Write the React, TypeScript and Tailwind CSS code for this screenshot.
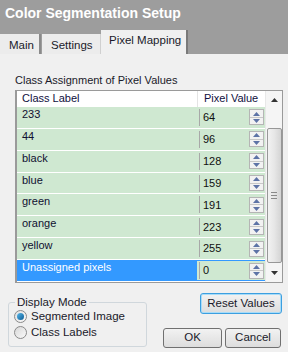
import React from "react";

const rows = [
  { label: "233", value: "64" },
  { label: "44", value: "96" },
  { label: "black", value: "128" },
  { label: "blue", value: "159" },
  { label: "green", value: "191" },
  { label: "orange", value: "223" },
  { label: "yellow", value: "255" },
];

function Spinner() {
  return (
    <div className="flex flex-col w-[15px] h-[16px] border border-[#b5b5b5] bg-[#f2f2f2]">
      <div className="flex-1 flex items-center justify-center border-b border-[#c8c8c8]">
        <svg width="7" height="4" viewBox="0 0 7 4">
          <path d="M0 4 L3.5 0 L7 4 Z" fill="#5d73a6" />
        </svg>
      </div>
      <div className="flex-1 flex items-center justify-center">
        <svg width="7" height="4" viewBox="0 0 7 4">
          <path d="M0 0 L3.5 4 L7 0 Z" fill="#5d73a6" />
        </svg>
      </div>
    </div>
  );
}

function Row({ label, value, selected }: { label: string; value: string; selected?: boolean }) {
  return (
    <div className="flex h-[22px] border-b border-white">
      <div
        className={
          selected
            ? "w-[180px] bg-[#3399ff] text-white pl-[5px] leading-[15px]"
            : "w-[180px] bg-[#cfe8d1] text-[#101030] pl-[5px] leading-[15px]"
        }
      >
        {label}
      </div>
      <div
        className={
          selected
            ? "flex-1 bg-[#cfe8d1] flex items-center border-y border-[#3399ff]"
            : "flex-1 bg-[#cfe8d1] flex items-center"
        }
      >
        <div className="w-[1px] h-[17px] bg-[#a8a8a8] ml-[2px]" />
        <span className="flex-1 pl-[3px] text-[#101010]">{value}</span>
        <div className="mr-[1px]">
          <Spinner />
        </div>
      </div>
    </div>
  );
}

export default function App() {
  return (
    <div
      className="relative w-[288px] h-[352px] bg-[#f0f0f0] overflow-hidden text-[11px] text-[#1a1a2a]"
      style={{ fontFamily: '"Liberation Sans", Arial, sans-serif' }}
    >
      <div className="bg-[#9d9d9d] h-[54px] flex flex-col">
        <div className="h-[31px] pl-[5px] pt-[4px] text-white font-bold text-[14px] leading-[18px]">
          Color Segmentation Setup
        </div>
        <div className="flex items-end h-[23px]">
          <div className="w-[41px] h-[20px] bg-[#ececec] border-r-2 border-[#8a8a8a] text-[11.5px] pl-[9px] pt-[3px]">
            Main
          </div>
          <div className="w-[59px] h-[20px] bg-[#ececec] border-r border-[#d0d0d0] ml-[1px] text-[11.5px] pl-[9px] pt-[3px]">
            Settings
          </div>
          <div className="w-[87px] h-[24px] bg-[#f0f0f0] border-r-2 border-[#7a7a7a] text-[11.5px] pl-[8px] pt-[2px]">
            Pixel Mapping
          </div>
        </div>
      </div>

      <div className="pl-[15px] pt-[19px] leading-[14px] h-[36px]">Class Assignment of Pixel Values</div>

      <div className="ml-[15px] w-[268px] h-[193px] border border-[#9a9a9a] border-l-2 bg-white flex">
        <div className="flex-1 flex flex-col">
          <div className="h-[16px] flex leading-[15px] text-[#101040]">
            <div className="w-[180px] pl-[5px]">Class Label</div>
            <div className="flex-1 pl-[6px] border-l border-[#e4e4e4]">Pixel Value</div>
          </div>
          {rows.map((r) => (
            <Row key={r.label} label={r.label} value={r.value} />
          ))}
          <Row label="Unassigned pixels" value="0" selected />
        </div>
        <div className="w-[17px] bg-[#f5f5f5] flex flex-col items-center border-l border-[#e8e8e8]">
          <div className="h-[17px] flex items-center justify-center">
            <svg width="7" height="4" viewBox="0 0 7 4">
              <path d="M0 4 L3.5 0 L7 4 Z" fill="#333" />
            </svg>
          </div>
          <div className="mt-[20px] w-[15px] h-[135px] rounded-[2px] border border-[#979797] bg-gradient-to-r from-[#f2f2f2] via-[#e6e6e6] to-[#d4d4d4] flex flex-col items-center justify-center gap-[2px]">
            <div className="w-[6px] h-[1px] bg-[#8a8a8a]" />
            <div className="w-[6px] h-[1px] bg-[#8a8a8a]" />
            <div className="w-[6px] h-[1px] bg-[#8a8a8a]" />
          </div>
          <div className="flex-1 flex items-center justify-center">
            <svg width="7" height="4" viewBox="0 0 7 4">
              <path d="M0 0 L3.5 4 L7 0 Z" fill="#333" />
            </svg>
          </div>
        </div>
      </div>

      <div className="flex mt-[10px]">
        <div className="ml-[8px] mt-[9px] w-[139px] h-[45px] border border-[#d0d7dc] rounded-[3px] relative">
          <div className="absolute left-[6px] top-[-8px] bg-[#f0f0f0] px-[2px] leading-[14px] text-[11.5px]">
            Display Mode
          </div>
          <div className="flex flex-col pl-[5px] pt-[7px] gap-[3px] text-[11.5px]">
            <div className="flex items-center gap-[4px] h-[13px]">
              <div className="w-[13px] h-[13px] rounded-full border border-[#8a8a8a] bg-gradient-to-br from-[#e0e0e0] to-[#fafafa] flex items-center justify-center">
                <div className="w-[7px] h-[7px] rounded-full bg-gradient-to-br from-[#55b7ea] to-[#0b5d95]" />
              </div>
              <span>Segmented Image</span>
            </div>
            <div className="flex items-center gap-[4px] h-[13px]">
              <div className="w-[13px] h-[13px] rounded-full border border-[#8a8a8a] bg-gradient-to-br from-[#d8d8d8] to-[#fafafa]" />
              <span>Class Labels</span>
            </div>
          </div>
        </div>
        <div className="flex-1 flex flex-col items-end pr-[6px]">
          <div className="w-[82px] h-[21px] rounded-[3px] border border-[#3c9fe0] bg-gradient-to-b from-[#f2f2f2] to-[#dddddd] flex items-center justify-center text-[11.5px] shadow-[inset_0_0_0_1px_#a8dcf8]">
            Reset Values
          </div>
          <div className="flex gap-[3px] mt-[14px] mr-[1px]">
            <div className="w-[59px] h-[20px] rounded-[3px] border border-[#707070] bg-gradient-to-b from-[#f2f2f2] to-[#dddddd] flex items-center justify-center text-[11.5px]">
              OK
            </div>
            <div className="w-[56px] h-[20px] rounded-[3px] border border-[#707070] bg-gradient-to-b from-[#f2f2f2] to-[#dddddd] flex items-center justify-center text-[11.5px]">
              Cancel
            </div>
          </div>
        </div>
      </div>
    </div>
  );
}
